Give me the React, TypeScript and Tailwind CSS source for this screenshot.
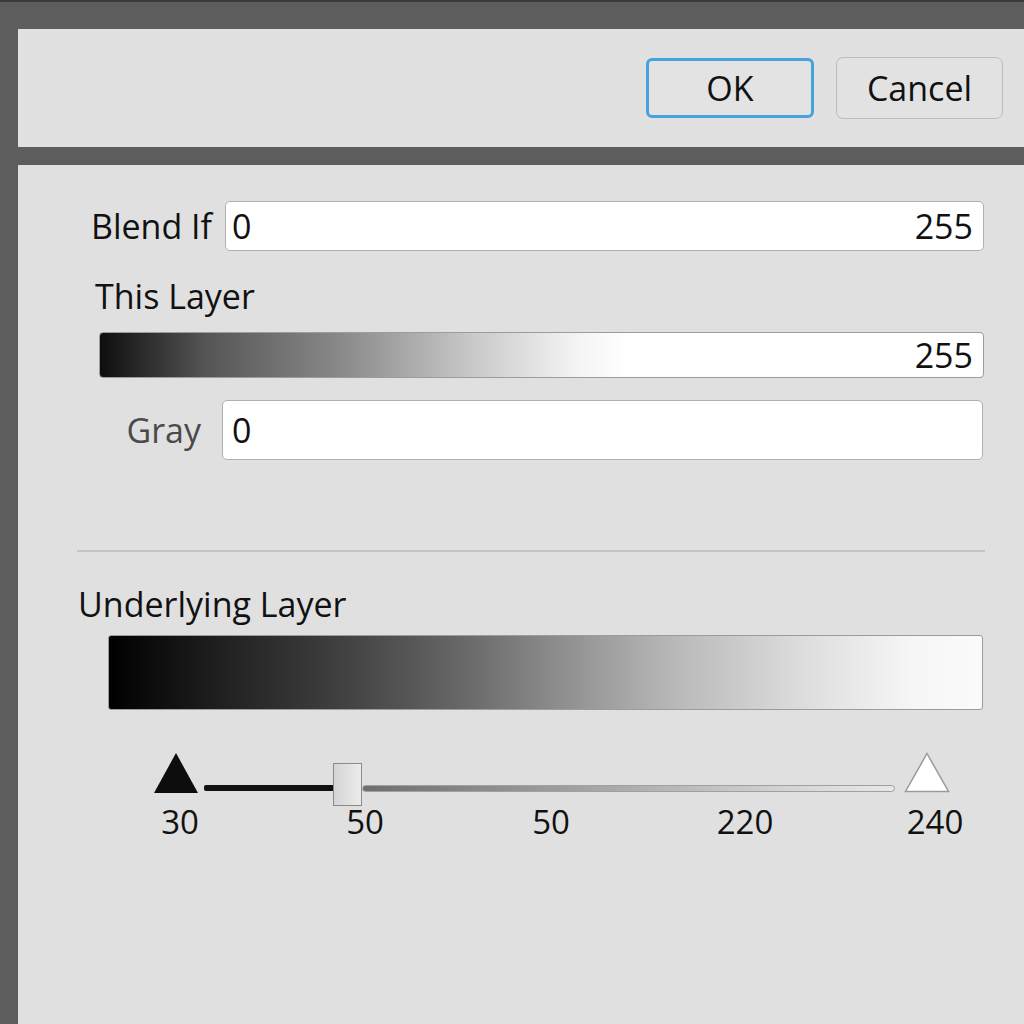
import React from "react";

export default function App() {
  return (
    <div className="w-[1024px] h-[1024px] overflow-hidden bg-[#5d5d5d] border-t-2 border-[#3a3a3a] pt-[27px] pl-[18px] flex flex-col font-['Open_Sans','Noto_Sans',sans-serif] text-[#111]">
      {/* Top button bar */}
      <div className="h-[118px] bg-[#e1e1e1] flex items-center justify-end gap-[22px] pr-[21px] shrink-0">
        <button className="w-[168px] h-[60px] rounded-[6px] border-[3px] border-[#46a2e0] bg-[#e3e3e3] text-[34px] leading-none text-[#111] flex items-center justify-center">
          OK
        </button>
        <button className="w-[167px] h-[62px] rounded-[7px] border-[1.5px] border-[#bcbcbc] bg-[#e2e2e2] text-[34px] leading-none text-[#111] flex items-center justify-center">
          Cancel
        </button>
      </div>

      <div className="h-[18px] shrink-0" />

      {/* Main panel */}
      <div className="flex-1 bg-[#e0e0e0] flex flex-col">
        {/* Blend If row */}
        <div className="mt-[36px] flex items-center pr-[40px]">
          <div className="w-[194px] text-right text-[34px] leading-[40px] text-[#111]">Blend If</div>
          <div className="ml-[13px] flex-1 h-[50px] bg-white border-[1.5px] border-[#b0b0b0] rounded-[5px] flex items-center justify-between pl-[6px] pr-[10px] text-[34px] leading-none">
            <span>0</span>
            <span>255</span>
          </div>
        </div>

        {/* This Layer */}
        <div className="mt-[25px] ml-[77px] text-[34px] leading-[40px]">This Layer</div>
        <div className="mt-[16px] ml-[81px] mr-[40px] h-[46px] rounded-[4px] border border-[#9c9c9c] bg-[linear-gradient(to_right,#0e0e0e_0%,#555_12%,#8c8c8c_28%,#c8c8c8_42%,#f4f4f4_54%,#ffffff_60%,#ffffff_100%)] flex items-center justify-end pr-[10px] text-[34px] leading-none">
          255
        </div>

        {/* Gray row */}
        <div className="mt-[22px] flex items-center pr-[41px]">
          <div className="w-[183px] text-right text-[34px] leading-[40px] text-[#4a4a4a]">Gray</div>
          <div className="ml-[21px] flex-1 h-[60px] bg-white border-[1.5px] border-[#b0b0b0] rounded-[5px] flex items-center pl-[9px] text-[34px] leading-none">
            <span>0</span>
          </div>
        </div>

        {/* Separator */}
        <div className="mt-[90px] ml-[59px] mr-[39px] h-[2px] bg-[#c4c4c4]" />

        {/* Underlying Layer */}
        <div className="mt-[32px] ml-[60px] text-[34px] leading-[40px]">Underlying Layer</div>
        <div className="mt-[11px] ml-[90px] mr-[41px] h-[75px] rounded-[3px] border border-[#9c9c9c] bg-[linear-gradient(to_right,#000_0%,#1e1e1e_12%,#3c3c3c_25%,#666_40%,#8f8f8f_52%,#b9b9b9_65%,#dedede_80%,#f6f6f6_92%,#fbfbfb_100%)]" />

        {/* Slider */}
        <div className="relative mt-[40px] h-[100px]">
          <svg className="absolute left-[135px] top-[2px]" width="46" height="42" viewBox="0 0 46 42">
            <polygon points="23,1 45,41 1,41" fill="#0d0d0d" />
          </svg>
          <div className="absolute left-[186px] top-[35px] w-[133px] h-[6px] bg-[#111] rounded-l-[2px]" />
          <div className="absolute left-[344px] top-[35px] w-[533px] h-[7px] rounded-full border border-[#a0a0a0] bg-[linear-gradient(to_right,#6e6e6e_0%,#8e8e8e_25%,#b4b4b4_55%,#dadada_85%,#e8e8e8_100%)]" />
          <div className="absolute left-[315px] top-[13px] w-[29px] h-[43px] border-[1.5px] border-[#8a8a8a] bg-[linear-gradient(to_right,#d4d4d4,#ececec)]" />
          <svg className="absolute left-[886px] top-[2px]" width="46" height="41" viewBox="0 0 46 41">
            <polygon points="23,1.5 44.5,39.5 1.5,39.5" fill="#ffffff" stroke="#9a9a9a" strokeWidth="1.5" />
          </svg>

          <div className="absolute left-[162px] top-[52px] -translate-x-1/2 text-[33px] leading-[40px]">30</div>
          <div className="absolute left-[347px] top-[52px] -translate-x-1/2 text-[33px] leading-[40px]">50</div>
          <div className="absolute left-[533px] top-[52px] -translate-x-1/2 text-[33px] leading-[40px]">50</div>
          <div className="absolute left-[727px] top-[52px] -translate-x-1/2 text-[33px] leading-[40px]">220</div>
          <div className="absolute left-[917px] top-[52px] -translate-x-1/2 text-[33px] leading-[40px]">240</div>
        </div>
      </div>
    </div>
  );
}
